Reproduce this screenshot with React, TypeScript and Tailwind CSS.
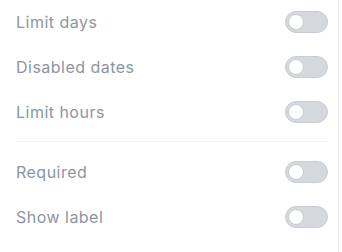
import { useState } from 'react'

type Option = { id: string; label: string }

const GROUPS: Option[][] = [
  [
    { id: 'limitDays', label: 'Limit days' },
    { id: 'disabledDates', label: 'Disabled dates' },
    { id: 'limitHours', label: 'Limit hours' },
  ],
  [
    { id: 'required', label: 'Required' },
    { id: 'showLabel', label: 'Show label' },
  ],
]

function Toggle({ on, onChange }: { on: boolean; onChange: () => void }) {
  return (
    <button
      type="button"
      onClick={onChange}
      className={`relative w-[43px] h-[22px] rounded-full border border-[#c9cdd3] transition-colors ${
        on ? 'bg-[#3b82f6]' : 'bg-[#d5d8dd]'
      }`}
    >
      <span
        className={`absolute top-[2px] w-4 h-4 rounded-full bg-white border border-[#c9cdd3] transition-all ${
          on ? 'left-[22px]' : 'left-[2px]'
        }`}
      />
    </button>
  )
}

export default function App() {
  const [values, setValues] = useState<Record<string, boolean>>({})

  return (
    <div className="w-[342px] h-[252px] bg-white overflow-hidden flex" style={{ fontFamily: 'Inter, "Noto Sans", sans-serif' }}>
      <div className="w-[339px] border-r border-[#eceef1] pl-4 pr-[10px]">
        <div className="-mt-px">
          {GROUPS.map((group, gi) => (
            <div key={gi}>
              {gi > 0 && <div className="h-px bg-[#f1f2f4] my-[7px]" />}
              {group.map((opt) => (
                <div key={opt.id} className="h-[45px] flex items-center justify-between">
                  <span className="text-[16px] tracking-[0.03em] text-[#8d95a1]">{opt.label}</span>
                  <Toggle
                    on={!!values[opt.id]}
                    onChange={() => setValues((v) => ({ ...v, [opt.id]: !v[opt.id] }))}
                  />
                </div>
              ))}
            </div>
          ))}
        </div>
      </div>
    </div>
  )
}
